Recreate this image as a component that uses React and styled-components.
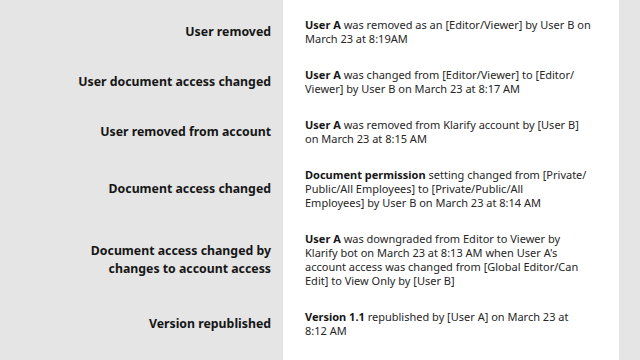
import React from 'react';
import styled, { createGlobalStyle } from 'styled-components';

const GlobalStyle = createGlobalStyle`
  html, body {
    margin: 0;
    padding: 0;
    background: #e5e5e5;
  }
  body {
    font-family: "Noto Sans", "Open Sans", Arial, sans-serif;
    color: #161616;
  }
`;

const Board = styled.div`
  min-height: 360px;
  padding-top: 18px;
  box-sizing: border-box;
  display: flex;
  flex-direction: column;
  gap: 22px;
  background: linear-gradient(
    to right,
    #e5e5e5 0,
    #e5e5e5 283px,
    #ffffff 283px,
    #ffffff 619px,
    #e5e5e5 619px
  );
`;

const Row = styled.div`
  display: grid;
  grid-template-columns: 283px 336px;
  align-items: center;
`;

const Label = styled.div`
  padding-right: 12px;
  text-align: right;
  font-size: 12.3px;
  line-height: 18px;
  font-weight: 700;
  color: #161616;
`;

const Description = styled.div`
  padding: 0 22px;
  font-size: 11px;
  line-height: 14px;
  color: #262626;
`;

const Line = styled.span`
  display: block;
  white-space: nowrap;
`;

const Strong = styled.strong`
  font-weight: 700;
  color: #161616;
`;

const events = [
  {
    label: ['User removed'],
    lead: 'User A',
    lines: [' was removed as an [Editor/Viewer] by User B on', 'March 23 at 8:19AM'],
  },
  {
    label: ['User document access changed'],
    lead: 'User A',
    lines: [' was changed from [Editor/Viewer] to [Editor/', 'Viewer] by User B on March 23 at 8:17 AM'],
  },
  {
    label: ['User removed from account'],
    lead: 'User A',
    lines: [' was removed from Klarify account by [User B]', 'on March 23 at 8:15 AM'],
  },
  {
    label: ['Document access changed'],
    lead: 'Document permission',
    lines: [
      ' setting changed from [Private/',
      'Public/All Employees] to [Private/Public/All',
      'Employees] by User B on March 23 at 8:14 AM',
    ],
  },
  {
    label: ['Document access changed by', 'changes to account access'],
    lead: 'User A',
    lines: [
      ' was downgraded from Editor to Viewer by',
      "Klarify bot on March 23 at 8:13 AM when User A's",
      'account access was changed from [Global Editor/Can',
      'Edit] to View Only by [User B]',
    ],
  },
  {
    label: ['Version republished'],
    lead: 'Version 1.1',
    lines: [' republished by [User A] on March 23 at', '8:12 AM'],
  },
];

export default function App() {
  return (
    <>
      <GlobalStyle />
      <Board>
        {events.map((event) => (
          <Row key={event.label.join(' ')}>
            <Label>
              {event.label.map((part) => (
                <Line key={part}>{part}</Line>
              ))}
            </Label>
            <Description>
              {event.lines.map((text, i) => (
                <Line key={text}>
                  {i === 0 && <Strong>{event.lead}</Strong>}
                  {text}
                </Line>
              ))}
            </Description>
          </Row>
        ))}
      </Board>
    </>
  );
}
